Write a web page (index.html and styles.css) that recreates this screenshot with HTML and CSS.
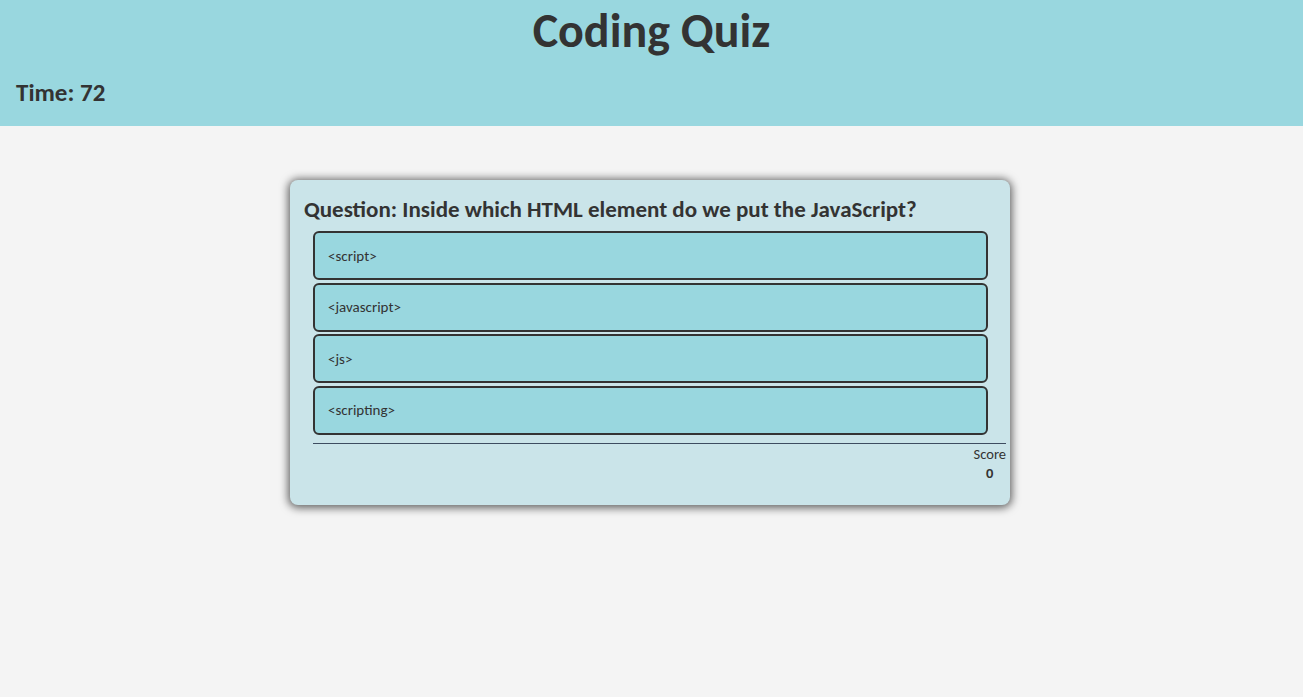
FILE: index.html
```html
<!DOCTYPE html>
<html lang="en">
<head>
<meta charset="utf-8">
<title>Coding Quiz</title>
<link rel="stylesheet" href="styles.css">
</head>
<body>
<header class="top">
  <h1 class="title">Coding Quiz</h1>
  <div class="timer">Time: 72</div>
</header>
<main class="main">
  <section class="card">
    <h2 class="question">Question: Inside which HTML element do we put the JavaScript?</h2>
    <div class="options">
      <button class="option">&lt;script&gt;</button>
      <button class="option">&lt;javascript&gt;</button>
      <button class="option">&lt;js&gt;</button>
      <button class="option">&lt;scripting&gt;</button>
    </div>
    <div class="footer">
      <div class="score">
        <div class="score-label">Score</div>
        <div class="score-value">0</div>
      </div>
    </div>
  </section>
</main>
</body>
</html>
```
FILE: styles.css
```css
* { box-sizing: border-box; }
html, body { margin: 0; padding: 0; }
body {
  background: #f4f4f4;
  font-family: "Carlito", "Lato", "Open Sans", sans-serif;
  color: #333;
  height: 697px;
  overflow: hidden;
}
.top {
  background: #99d7df;
  height: 126px;
  padding: 3px 16px 0;
}
.title {
  margin: 0;
  text-align: center;
  font-size: 48px;
  line-height: 56px;
  font-weight: 700;
  color: #333;
}
.timer {
  margin-top: 20px;
  font-size: 25px;
  line-height: 28px;
  font-weight: 700;
}
.main {
  display: flex;
  justify-content: center;
  padding-top: 54px;
}
.card {
  width: 720px;
  margin-left: -3px;
  background: #cae4e9;
  border-radius: 8px;
  box-shadow: 0 1px 8px 2px rgba(0,0,0,0.6);
  padding: 16px 4px 22px 14px;
}
.question {
  margin: 0 0 8px;
  font-size: 23px;
  line-height: 27px;
  font-weight: 700;
  color: #333;
}
.options {
  display: flex;
  flex-direction: column;
  gap: 2.6px;
  padding-left: 9px;
  padding-right: 18px;
}
.option {
  display: block;
  width: 100%;
  height: 49px;
  text-align: left;
  background: #99d7df;
  border: 2px solid #333;
  border-radius: 6px;
  padding: 0 13px;
  font-family: inherit;
  font-size: 15px;
  color: #333;
}
.footer {
  margin: 8px 0 0 9px;
  border-top: 1px solid #3d4c60;
  display: flex;
  justify-content: flex-end;
}
.score {
  display: flex;
  flex-direction: column;
  align-items: center;
  font-size: 14.5px;
  line-height: 19px;
  padding-top: 1px;
}
.score-value { font-weight: 700; }
```
